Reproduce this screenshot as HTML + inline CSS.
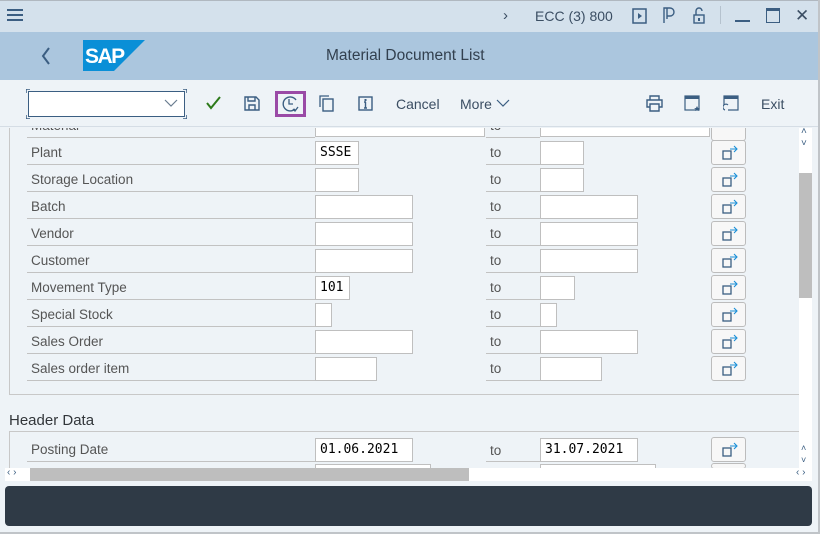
<!DOCTYPE html>
<html><head><meta charset="utf-8"><style>
*{box-sizing:border-box;margin:0;padding:0}
body{width:820px;height:534px;overflow:hidden;background:#eef3f7;font-family:"Liberation Sans",sans-serif;position:relative;color:#32363a}
.abs{position:absolute}
.top{left:0;top:0;width:820px;height:32px;background:#d4e1ec;border-top:1px solid #b0b8c0}
.hdr{left:0;top:32px;width:820px;height:48px;background:#abc6de}
.tb{left:0;top:80px;width:820px;height:47px;background:#eef3f7;border-bottom:1px solid #d5dde5}
.t{font-size:14px;color:#3b4e63}
.lbl{font-size:13.5px;color:#555;position:absolute;left:31px}
.ln{position:absolute;height:1px;background:#c2c2c2}
.in{position:absolute;background:#fff;border:1px solid #bfbfbf;height:24px;font-family:"DejaVu Sans Mono","Liberation Mono",monospace;font-size:13px;color:#000;padding:3px 0 0 4px}
.to{position:absolute;left:490px;font-size:13.5px;color:#555}
.btn{position:absolute;left:711px;width:35px;height:25px;border:1px solid #bcbcbc;border-radius:3px;background:#f7f7f7}
.btn svg{position:absolute;left:10px;top:4px}
</style></head><body>
<div class="abs top"></div>
<div class="abs" style="left:7px;top:9px;width:16px;height:2px;background:#3b5e82;box-shadow:0 5px 0 #3b5e82,0 10px 0 #3b5e82"></div>
<div class="abs t" style="left:503px;top:7px;font-size:15px">&#x203A;</div>
<div class="abs t" style="left:535px;top:8px">ECC (3) 800</div>
<svg class="abs" style="left:632px;top:8px" width="16" height="16"><rect x="1" y="1" width="13" height="14" fill="none" stroke="#3b5e82" stroke-width="1.5"/><path d="M6 5l4 3-4 3z" fill="#3b5e82"/></svg>
<svg class="abs" style="left:662px;top:7px" width="16" height="17"><path d="M2 16V1h6a4 4 0 010 8H5M5 1v11" fill="none" stroke="#3b5e82" stroke-width="1.4"/></svg>
<svg class="abs" style="left:692px;top:7px" width="14" height="17"><path d="M4 8V4a3 3 0 016 0" fill="none" stroke="#3b5e82" stroke-width="1.4"/><rect x="2" y="8" width="10" height="8" fill="none" stroke="#3b5e82" stroke-width="1.4"/><rect x="6" y="11" width="2" height="3" fill="#3b5e82"/></svg>
<div class="abs" style="left:720px;top:6px;width:1px;height:18px;background:#b5c2ce"></div>
<div class="abs" style="left:735px;top:20px;width:15px;height:2px;background:#3b5e82"></div>
<div class="abs" style="left:766px;top:8px;width:14px;height:15px;border:1.5px solid #3b5e82;border-top-width:3px"></div>
<div class="abs t" style="left:795px;top:6px;font-size:17px">&#x2715;</div>
<div class="abs hdr"></div>
<svg class="abs" style="left:40px;top:46px" width="12" height="20"><path d="M9 2L3 10l6 8" fill="none" stroke="#3b5e82" stroke-width="2"/></svg>
<svg class="abs" style="left:83px;top:40px" width="62" height="31"><path d="M0 0h62L31 31H0z" fill="#0a8fd7"/><text x="2" y="23" font-family="Liberation Sans" font-weight="bold" font-size="21" fill="#fff" letter-spacing="-1.5">SAP</text></svg>
<div class="abs" style="left:326px;top:47px;font-size:15.5px;color:#32404f">Material Document List</div>
<div class="abs tb"></div>
<div class="abs" style="left:28px;top:91px;width:157px;height:26px;background:#fff;border:1px solid #3b5e82"></div>
<svg class="abs" style="left:26px;top:89px" width="161" height="30"><path d="M0 4V0h4M157 0h4v4M0 26v4h4M157 30h4v-4" fill="none" stroke="#3b5e82" stroke-width="1.5"/></svg>
<svg class="abs" style="left:164px;top:99px" width="14" height="9"><path d="M1 1l6 6 6-6" fill="none" stroke="#6a7d90" stroke-width="1.2"/></svg>
<svg class="abs" style="left:206px;top:96px" width="15" height="14"><path d="M1 7l4 5 9-11" fill="none" stroke="#2d7a1a" stroke-width="2"/></svg>
<svg class="abs" style="left:244px;top:96px" width="16" height="15"><path d="M1 1h11l3 3v10H1z M4 1v4h7V1 M5 14V9h6v5" fill="none" stroke="#3b5e82" stroke-width="1.4"/></svg>
<div class="abs" style="left:275px;top:91px;width:31px;height:26px;border:3px solid #9a4aa6"></div>
<svg class="abs" style="left:281px;top:95px" width="19" height="18"><path d="M14 14A7 7 0 1 1 15 5" fill="none" stroke="#3b5e82" stroke-width="1.4"/><path d="M8 4v5h4M12 14l2 2 3-4" fill="none" stroke="#3b5e82" stroke-width="1.3"/></svg>
<svg class="abs" style="left:319px;top:95px" width="16" height="17"><path d="M1 12V1h9" fill="none" stroke="#3b5e82" stroke-width="1.3"/><rect x="4" y="4" width="10" height="12" fill="none" stroke="#3b5e82" stroke-width="1.4"/></svg>
<svg class="abs" style="left:358px;top:96px" width="15" height="15"><rect x="1" y="1" width="13" height="13" fill="none" stroke="#3b5e82" stroke-width="1.4"/><path d="M7.5 6v6M6 6h2M6 12h3" stroke="#3b5e82" stroke-width="1.4"/><rect x="6.5" y="3" width="2" height="2" fill="#3b5e82"/></svg>
<div class="abs t" style="left:396px;top:96px">Cancel</div>
<div class="abs t" style="left:460px;top:96px">More</div>
<svg class="abs" style="left:496px;top:99px" width="14" height="9"><path d="M1 1l6 6 6-6" fill="none" stroke="#3b5e82" stroke-width="1.2"/></svg>
<svg class="abs" style="left:646px;top:95px" width="17" height="17"><path d="M4 5V1h9v4M4 12H1V5h15v7h-3M4 9h9v7H4z" fill="none" stroke="#3b5e82" stroke-width="1.4"/></svg>
<svg class="abs" style="left:684px;top:95px" width="17" height="17"><rect x="1" y="1" width="14" height="14" fill="none" stroke="#3b5e82" stroke-width="1.2"/><rect x="1" y="1" width="14" height="3" fill="#3b5e82"/><path d="M13 11l1 2h2l-1.5 1 .5 2-2-1-2 1 .5-2-1.5-1h2z" fill="#3b5e82"/></svg>
<svg class="abs" style="left:723px;top:95px" width="17" height="17"><path d="M5 15h10V1H1v9" fill="none" stroke="#3b5e82" stroke-width="1.2"/><rect x="1" y="1" width="14" height="3" fill="#3b5e82"/><path d="M5 10a3 3 0 10-3 5" fill="none" stroke="#3b5e82" stroke-width="1.2"/></svg>
<div class="abs t" style="left:761px;top:96px">Exit</div>

<div class="abs" style="left:0;top:128px;width:799px;height:340px;overflow:hidden">
 <div class="abs" style="left:9px;top:-10px;width:800px;height:277px;border:1px solid #c8c8c8;border-top:none"></div>
 <div class="lbl" style="top:-10px">Material</div>
 <div class="to" style="top:-10px">to</div>
 <div class="abs" style="left:315px;top:-6px;width:170px;height:15px;background:#fff;border:1px solid #bfbfbf"></div>
 <div class="abs" style="left:540px;top:-6px;width:170px;height:15px;background:#fff;border:1px solid #bfbfbf"></div>
 <div class="ln" style="left:27px;top:9px;width:288px"></div><div class="ln" style="left:486px;top:9px;width:54px"></div>
 <div class="btn" style="top:-12px"></div>
 <div class="abs" style="left:9px;top:284px;font-size:15px;color:#32363a">Header Data</div>
 <div class="abs" style="left:9px;top:303px;width:800px;height:60px;border:1px solid #c8c8c8;border-bottom:none"></div>
</div>
<div id="rows"></div>
<script>
var R=[["Plant",44,"SSSE",44],["Storage Location",44,"",44],["Batch",98,"",98],["Vendor",98,"",98],["Customer",98,"",98],["Movement Type",35,"101",35],["Special Stock",17,"",17],["Sales Order",98,"",98],["Sales order item",62,"",62]];
var h="";
var ic='<svg width="16" height="16"><rect x="1" y="6" width="8" height="8" fill="none" stroke="#3b5e82" stroke-width="1.3"/><path d="M8 4h7M12 1l3 3-3 3" fill="none" stroke="#1a8fd7" stroke-width="1.1"/></svg>';
R.forEach(function(r,i){var y=141+27*i;
h+='<div class="lbl" style="top:'+(y+4)+'px">'+r[0]+'</div><div class="ln" style="left:27px;top:'+(y+23)+'px;width:288px"></div><div class="in" style="left:315px;top:'+y+'px;width:'+r[1]+'px">'+r[2]+'</div><div class="to" style="top:'+(y+4)+'px">to</div><div class="ln" style="left:486px;top:'+(y+23)+'px;width:54px"></div><div class="in" style="left:540px;top:'+y+'px;width:'+r[3]+'px"></div><div class="btn" style="top:'+(y-1)+'px">'+ic+'</div>';});
var y=438;
h+='<div class="lbl" style="top:'+(y+4)+'px">Posting Date</div><div class="ln" style="left:27px;top:'+(y+23)+'px;width:288px"></div><div class="in" style="left:315px;top:'+y+'px;width:98px">01.06.2021</div><div class="to" style="top:'+(y+5)+'px">to</div><div class="ln" style="left:486px;top:'+(y+23)+'px;width:54px"></div><div class="in" style="left:540px;top:'+y+'px;width:98px">31.07.2021</div><div class="btn" style="top:'+(y-1)+'px">'+ic+'</div>';
h+='<div class="in" style="left:315px;top:464px;width:116px;height:6px;padding:0"></div><div class="in" style="left:540px;top:464px;width:116px;height:6px;padding:0"></div><div class="btn" style="top:463px;height:6px"></div>';
document.getElementById("rows").innerHTML=h;
</script>
<div class="abs" style="left:799px;top:128px;width:13px;height:340px;background:#fff"></div>
<div class="abs" style="left:799px;top:173px;width:13px;height:125px;background:#bebebe"></div>
<div class="abs" style="left:801px;top:126px;font-size:10px;color:#3b5e82">&#x02C4;</div>
<div class="abs" style="left:801px;top:138px;font-size:10px;color:#3b5e82">&#x02C5;</div>
<div class="abs" style="left:801px;top:443px;font-size:9px;color:#3b5e82">&#x02C4;</div>
<div class="abs" style="left:801px;top:455px;font-size:9px;color:#3b5e82">&#x02C5;</div>
<div class="abs" style="left:5px;top:468px;width:807px;height:13px;background:#fff"></div>
<div class="abs" style="left:30px;top:468px;width:439px;height:13px;background:#bebebe"></div>
<div class="abs" style="left:7px;top:467px;font-size:10px;color:#3b5e82">&#x2039; &#x203A;</div>
<div class="abs" style="left:796px;top:467px;font-size:10px;color:#3b5e82">&#x2039; &#x203A;</div>
<div class="abs" style="left:5px;top:486px;width:807px;height:40px;background:#2f3a46;border-radius:4px"></div>
<div class="abs" style="left:0;top:532px;width:820px;height:2px;background:#c0c4c8"></div>
<div class="abs" style="left:818px;top:0;width:2px;height:534px;background:#c0c4c8"></div>
</body></html>
